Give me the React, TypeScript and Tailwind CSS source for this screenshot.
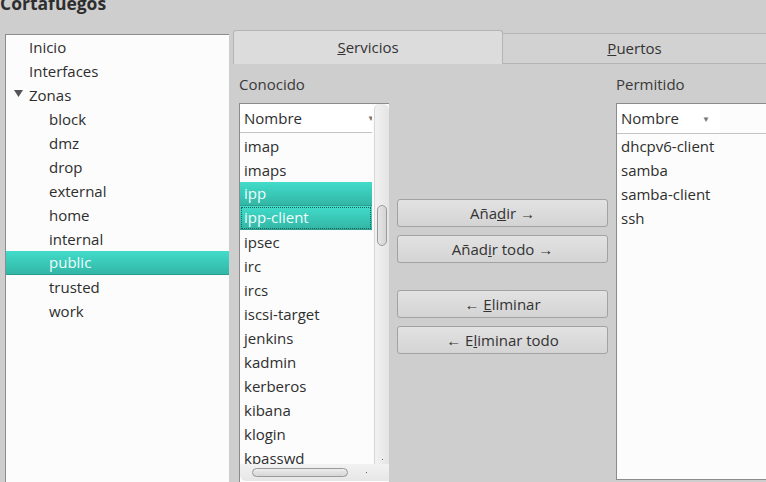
const zonas = ["block", "dmz", "drop", "external", "home", "internal", "public", "trusted", "work"];

const conocidos = [
  "imap",
  "imaps",
  "ipp",
  "ipp-client",
  "ipsec",
  "irc",
  "ircs",
  "iscsi-target",
  "jenkins",
  "kadmin",
  "kerberos",
  "kibana",
  "klogin",
  "kpasswd",
];

const permitidos = ["dhcpv6-client", "samba", "samba-client", "ssh"];

const selBg = "bg-gradient-to-b from-[#42dcca] to-[#33b6a6] border-b border-[#2a9e90] text-[#effffc]";

function Row({ label, indent, selected }: { label: string; indent: string; selected?: boolean }) {
  return (
    <div className={`h-6 flex items-center ${indent} ${selected ? selBg : ""}`}>{label}</div>
  );
}

function Button({ children }: { children: React.ReactNode }) {
  return (
    <button className="h-[28px] w-full rounded-[3px] border border-[#a2a2a2] bg-gradient-to-b from-[#e2e2e2] to-[#d4d4d4] text-[15px] text-[#333] flex items-center justify-center">
      {children}
    </button>
  );
}

export default function App() {
  return (
    <div
      className="w-[766px] h-[482px] overflow-hidden bg-[#cecece] text-[15px] text-[#2e2e2e]"
      style={{ fontFamily: '"Open Sans", "Noto Sans", sans-serif' }}
    >
      <div className="h-[30px] flex items-start">
        <div className="mt-[-7px] text-[17.5px] leading-[20px] font-bold text-[#2e2e2e]">Cortafuegos</div>
      </div>

      <div className="flex">
        {/* Tree */}
        <div className="ml-[5px] mt-[4px] w-[224px] h-[450px] bg-[#fcfcfc] border-l border-t border-[#8c8c8c]">
          <Row label="Inicio" indent="pl-[23px]" />
          <Row label="Interfaces" indent="pl-[23px]" />
          <div className="h-6 flex items-center pl-[8px]">
            <svg width="9" height="8" viewBox="0 0 9 8" className="mr-[6px] mt-[-2px]">
              <path d="M0 0 L9 0 L4.5 7 Z" fill="#555" />
            </svg>
            Zonas
          </div>
          {zonas.map((z) => (
            <Row key={z} label={z} indent="pl-[43px]" selected={z === "public"} />
          ))}
        </div>

        {/* Right */}
        <div className="ml-[4px] flex-1 min-w-0">
          <div className="flex h-[34px]">
            <div className="w-[270px] h-[34px] rounded-t-[3px] border border-b-0 border-[#b4b4b4] bg-[#dcdcdc] flex items-center justify-center text-[#333]">
              <span>
                <u>S</u>ervicios
              </span>
            </div>
            <div className="flex-1 mt-[3px] h-[31px] border-t border-b border-[#b4b4b4] bg-[#d2d2d2] flex items-center justify-center text-[#333]">
              <span>
                <u>P</u>uertos
              </span>
            </div>
          </div>

          <div className="flex pl-[6px] pt-[11px]">
            {/* Conocido */}
            <div className="w-[150px] shrink-0">
              <div className="h-[18px] leading-[18px] text-[#3a3a3a]">Conocido</div>
              <div className="mt-[10px] h-[380px] bg-[#fcfcfc] border-l border-t border-[#8c8c8c] flex flex-col">
                <div className="flex flex-1 min-h-0">
                  <div className="flex-1 min-w-0 overflow-hidden">
                    <div className="h-[29px] bg-white border-b border-[#c4c4c4] flex items-center pl-[4px] relative">
                      Nombre
                      <span className="absolute right-[-3px] top-[8px] text-[8px] text-[#777]">▼</span>
                    </div>
                    <div className="pt-[1px]">
                      {conocidos.map((c) => (
                        <div
                          key={c}
                          className={`h-6 flex items-center pl-[4px] ${
                            c === "ipp" || c === "ipp-client" ? selBg : ""
                          } ${c === "ipp-client" ? "outline-1 outline-dotted outline-offset-[-2px] outline-[#1f5f57]" : ""}`}
                        >
                          {c}
                        </div>
                      ))}
                    </div>
                  </div>
                  <div className="w-[15px] shrink-0 ml-[2px] rounded-t-[6px] bg-gradient-to-r from-[#f2f2f2] to-[#e4e4e4] border-l border-[#d6d6d6] relative">
                    <div className="absolute left-[2px] top-[101px] w-[10px] h-[41px] rounded-[5px] border border-[#9a9a9a] bg-gradient-to-r from-[#e6e6e6] to-[#d4d4d4]" />
                    <div className="absolute left-[7px] bottom-[4px] w-[1px] h-[1px] bg-[#666]" />
                  </div>
                </div>
                <div className="h-[17px] shrink-0 flex items-center bg-gradient-to-b from-[#f2f2f2] to-[#e6e6e6] rounded-bl-[6px] mb-[2px]">
                  <div className="ml-[12px] w-[96px] h-[9px] rounded-full border border-[#9a9a9a] bg-gradient-to-b from-[#ececec] to-[#d6d6d6]" />
                  <div className="ml-[18px] w-[1px] h-[1px] bg-[#666]" />
                </div>
              </div>
            </div>

            {/* Buttons */}
            <div className="w-[211px] ml-[8px] shrink-0 pt-[124px] flex flex-col">
              <Button>
                <span>
                  Aña<u>d</u>ir →
                </span>
              </Button>
              <div className="h-2" />
              <Button>
                <span>
                  Añad<u>i</u>r todo →
                </span>
              </Button>
              <div className="h-[27px]" />
              <Button>
                <span>
                  ← <u>E</u>liminar
                </span>
              </Button>
              <div className="h-2" />
              <Button>
                <span>
                  ← E<u>l</u>iminar todo
                </span>
              </Button>
            </div>

            {/* Permitido */}
            <div className="ml-[8px] flex-1 min-w-0">
              <div className="h-[18px] leading-[18px] text-[#3a3a3a]">Permitido</div>
              <div className="mt-[10px] h-[377px] bg-[#fcfcfc] border-l border-t border-b border-[#8c8c8c]">
                <div className="h-[30px] border-b border-[#c4c4c4] bg-[#fcfcfc] flex">
                  <div className="w-[103px] bg-white flex items-center pl-[4px]">
                    Nombre
                    <span className="ml-[23px] text-[8px] text-[#777]">▼</span>
                  </div>
                </div>
                <div>
                  {permitidos.map((p) => (
                    <div key={p} className="h-6 flex items-center pl-[4px]">
                      {p}
                    </div>
                  ))}
                </div>
              </div>
            </div>
          </div>
        </div>
      </div>
    </div>
  );
}
